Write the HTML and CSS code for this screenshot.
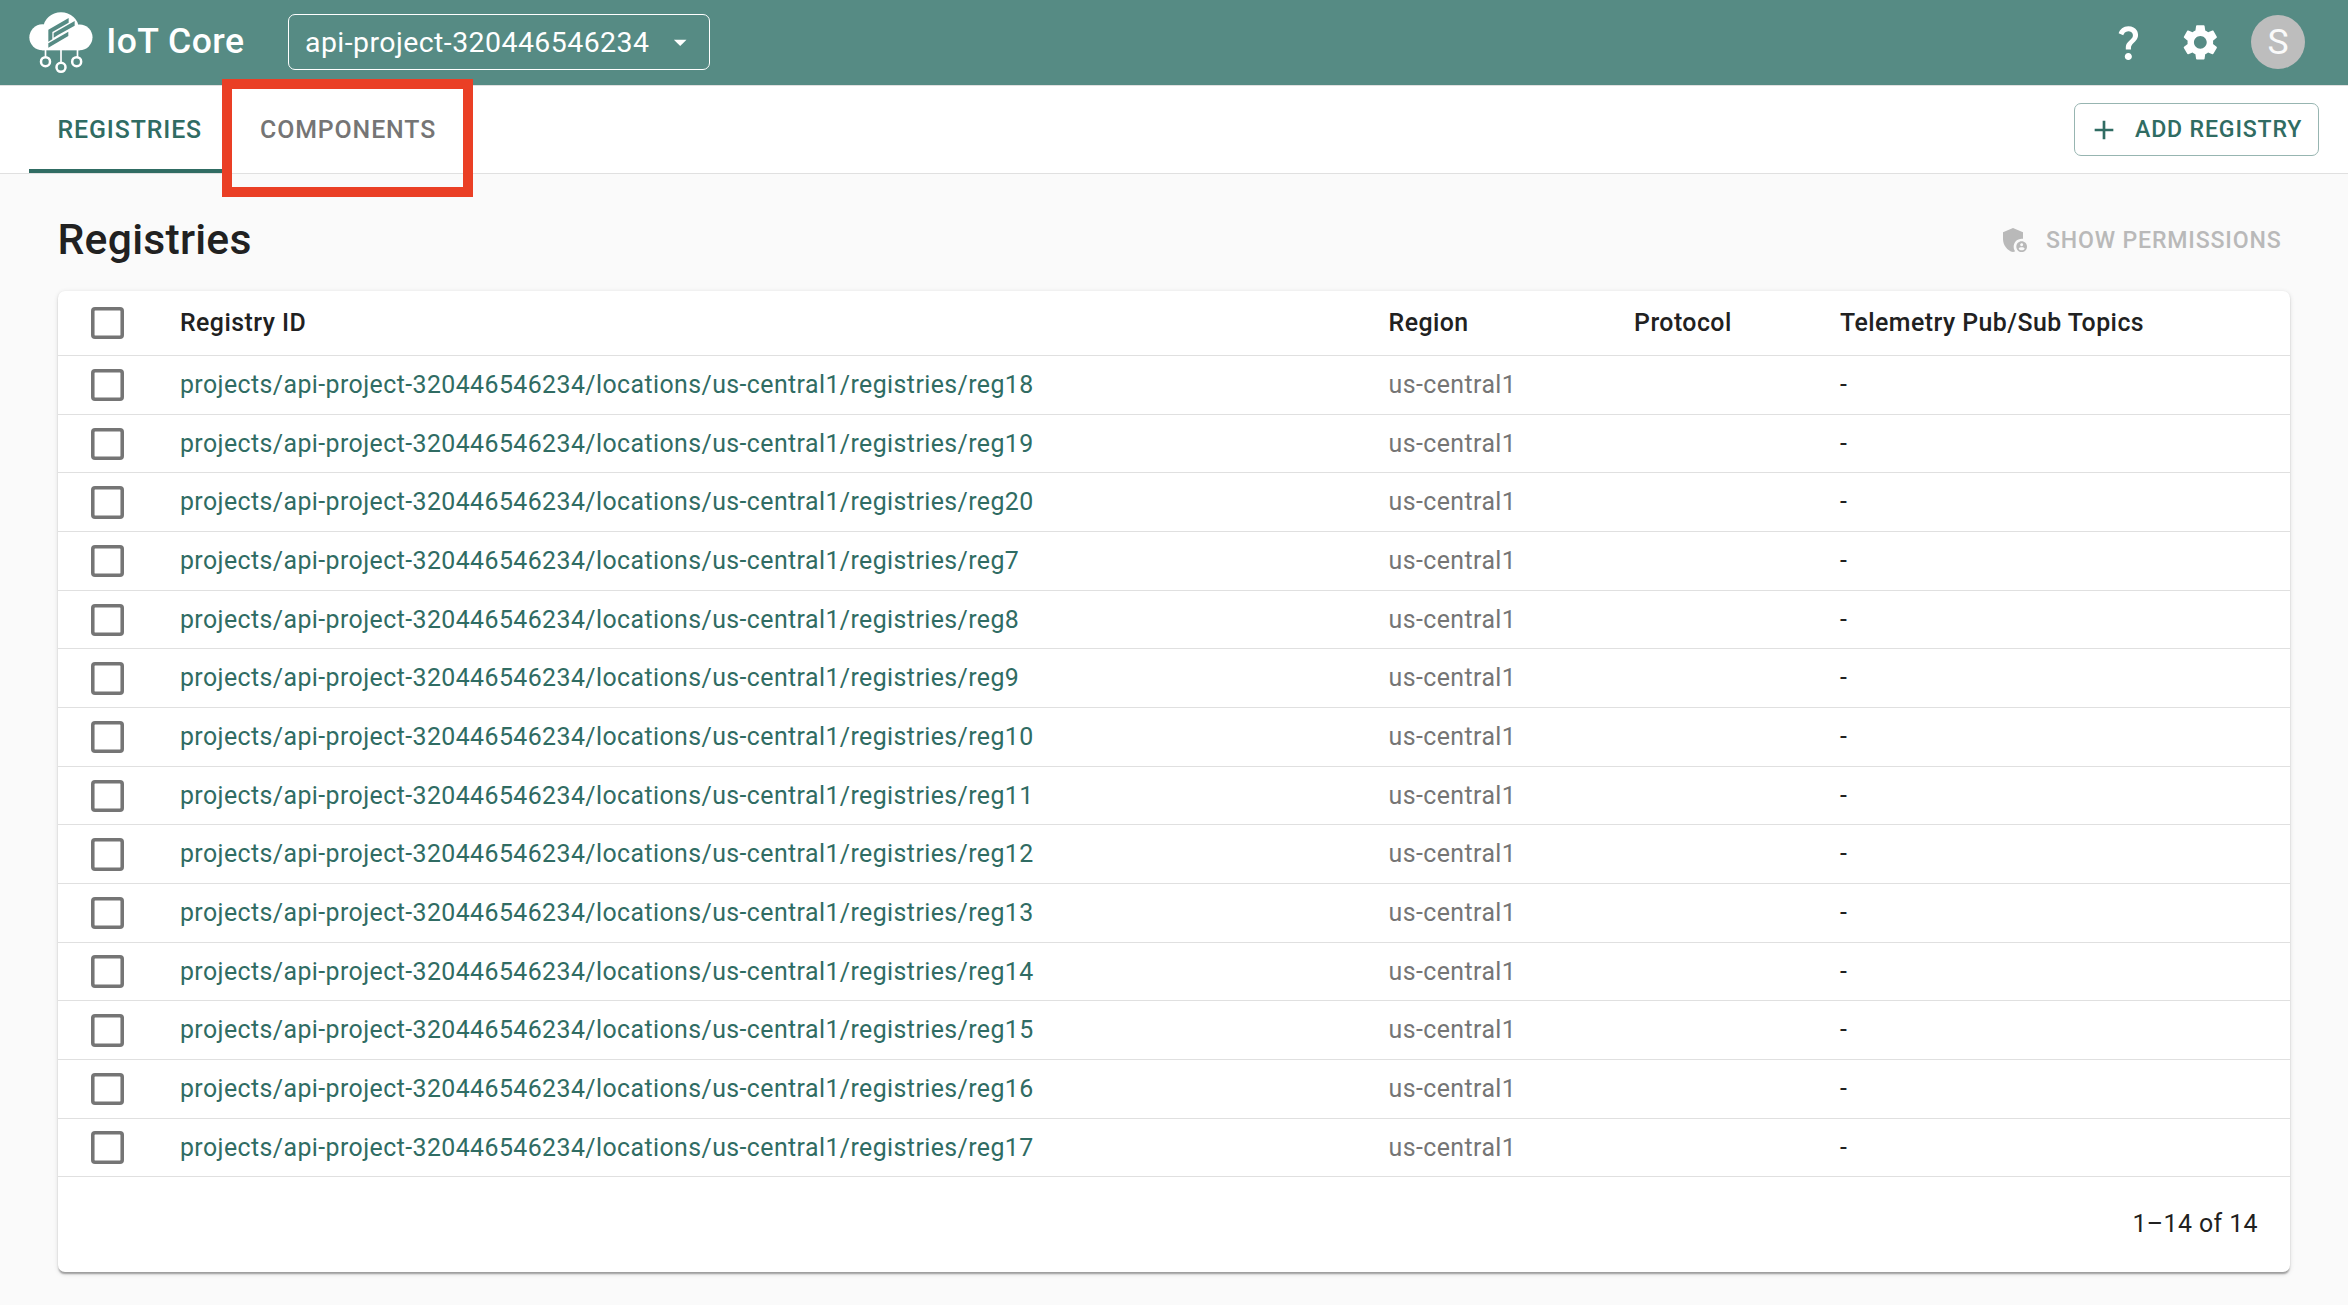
FILE: index.html
```
<!DOCTYPE html>
<html lang="en">
<head>
<meta charset="utf-8">
<title>IoT Core</title>
<link rel="stylesheet" href="styles.css">
</head>
<body>
<header class="appbar">
  <svg class="logo" viewBox="86 35 192 186" aria-hidden="true">
    <g fill="#fff">
      <circle cx="126" cy="111" r="39"/>
      <circle cx="238" cy="111" r="38.5"/>
      <ellipse cx="182" cy="83" rx="53" ry="47"/>
      <rect x="126" y="78" width="112" height="72"/>
      <rect x="133" y="148" width="5" height="22"/>
      <rect x="179.500" y="148" width="5" height="38"/>
      <rect x="229" y="148" width="5" height="22"/>
    </g>
    <g fill="none" stroke="#fff" stroke-width="7.500">
      <circle cx="135.500" cy="184" r="13.500"/>
      <circle cx="182" cy="201" r="13.500"/>
      <circle cx="229" cy="184" r="13.500"/>
    </g>
    <g fill="#568b84">
      <path d="M144 88 205 53V67L156 95V117L144 124Z"/>
      <path d="M160 98 223 62V76L173 104 160 112Z"/>
      <path d="M144 129 204 94V107L144 142Z"/>
    </g>
  </svg>
  <span class="brand">IoT Core</span>
  <div class="project"><span>api-project-320446546234</span>
    <svg class="arrow" viewBox="0 0 24 24"><path fill="#fff" d="m7 10 5 5 5-5z"/></svg>
  </div>
  <div class="tools">
    <svg class="tool help" viewBox="0 0 24 24"><path fill="#fff" d="M11.070 12.850c.770-1.390 2.250-2.210 3.110-3.440.910-1.290.400-3.700-2.180-3.700-1.690 0-2.520 1.280-2.870 2.340L6.540 6.960C7.250 4.830 9.180 3 11.990 3c2.350 0 3.960 1.070 4.780 2.410.700 1.150 1.110 3.300.030 4.900-1.200 1.770-2.350 2.310-2.970 3.450-.250.460-.350.760-.350 2.240h-2.890c-.010-.780-.130-2.050.480-3.150zM14 20c0 1.100-.900 2-2 2s-2-.900-2-2 .900-2 2-2 2 .900 2 2z"/></svg>
    <svg class="tool" viewBox="0 0 24 24"><path fill="#fff" d="M19.140 12.940c.040-.300.060-.610.060-.940 0-.320-.020-.640-.070-.940l2.030-1.580c.180-.140.230-.410.120-.610l-1.920-3.320c-.120-.220-.370-.290-.590-.220l-2.390.960c-.500-.380-1.030-.700-1.620-.940l-.360-2.540c-.040-.240-.240-.410-.480-.410h-3.840c-.240 0-.430.170-.470.410l-.360 2.540c-.590.240-1.130.570-1.620.940l-2.390-.960c-.220-.080-.470 0-.590.220L2.740 8.870c-.120.210-.080.470.120.610l2.030 1.580c-.050.300-.090.630-.090.940s.020.640.070.940l-2.030 1.580c-.180.140-.230.410-.120.610l1.920 3.320c.120.220.370.290.590.220l2.390-.960c.500.380 1.030.700 1.620.940l.360 2.540c.050.240.240.410.480.410h3.840c.240 0 .440-.170.470-.410l.360-2.540c.590-.240 1.130-.560 1.620-.940l2.390.960c.220.080.470 0 .590-.220l1.920-3.320c.120-.220.070-.470-.120-.610l-2.010-1.580zM12 15.600c-1.980 0-3.600-1.620-3.600-3.600s1.620-3.600 3.600-3.600 3.600 1.620 3.600 3.600-1.620 3.600-3.600 3.600z"/></svg>
    <div class="avatar">S</div>
  </div>
</header>
<nav class="tabbar">
  <div class="tab active">REGISTRIES</div>
  <div class="tab second">COMPONENTS<i class="highlight"></i></div>
  <div class="add">
    <svg class="icon" viewBox="0 0 24 24"><path fill="currentColor" d="M19 13h-6v6h-2v-6H5v-2h6V5h2v6h6v2z"/></svg>
    <span>ADD REGISTRY</span>
  </div>
</nav>
<main class="content">
  <div class="heading">
    <h1>Registries</h1>
    <div class="permissions">
      <svg class="icon" viewBox="0 0 24 24"><g fill="currentColor"><path d="M17 11c.340 0 .670.040 1 .090V6.270L10.500 3 3 6.270v4.910c0 4.540 3.200 8.790 7.500 9.820.550-.130 1.080-.320 1.600-.550-.690-.980-1.100-2.170-1.100-3.450 0-3.310 2.690-6 6-6z"/><path d="M17 13c-2.210 0-4 1.790-4 4s1.790 4 4 4 4-1.790 4-4-1.790-4-4-4zm0 1.380c.620 0 1.120.510 1.120 1.120s-.510 1.120-1.120 1.120-1.120-.510-1.120-1.120.500-1.120 1.120-1.120zm0 5.370c-.930 0-1.740-.460-2.240-1.170.050-.720 1.510-1.080 2.240-1.080s2.190.360 2.240 1.080c-.500.710-1.310 1.170-2.240 1.170z"/></g></svg>
      <span>SHOW PERMISSIONS</span>
    </div>
  </div>
  <section class="card">
    <div class="row head"><i class="check"></i><span>Registry ID</span><span>Region</span><span>Protocol</span><span>Telemetry Pub/Sub Topics</span></div>
    <div class="row"><i class="check"></i><a>projects/api-project-320446546234/locations/us-central1/registries/reg18</a><span class="region">us-central1</span><span></span><span>-</span></div>
    <div class="row"><i class="check"></i><a>projects/api-project-320446546234/locations/us-central1/registries/reg19</a><span class="region">us-central1</span><span></span><span>-</span></div>
    <div class="row"><i class="check"></i><a>projects/api-project-320446546234/locations/us-central1/registries/reg20</a><span class="region">us-central1</span><span></span><span>-</span></div>
    <div class="row"><i class="check"></i><a>projects/api-project-320446546234/locations/us-central1/registries/reg7</a><span class="region">us-central1</span><span></span><span>-</span></div>
    <div class="row"><i class="check"></i><a>projects/api-project-320446546234/locations/us-central1/registries/reg8</a><span class="region">us-central1</span><span></span><span>-</span></div>
    <div class="row"><i class="check"></i><a>projects/api-project-320446546234/locations/us-central1/registries/reg9</a><span class="region">us-central1</span><span></span><span>-</span></div>
    <div class="row"><i class="check"></i><a>projects/api-project-320446546234/locations/us-central1/registries/reg10</a><span class="region">us-central1</span><span></span><span>-</span></div>
    <div class="row"><i class="check"></i><a>projects/api-project-320446546234/locations/us-central1/registries/reg11</a><span class="region">us-central1</span><span></span><span>-</span></div>
    <div class="row"><i class="check"></i><a>projects/api-project-320446546234/locations/us-central1/registries/reg12</a><span class="region">us-central1</span><span></span><span>-</span></div>
    <div class="row"><i class="check"></i><a>projects/api-project-320446546234/locations/us-central1/registries/reg13</a><span class="region">us-central1</span><span></span><span>-</span></div>
    <div class="row"><i class="check"></i><a>projects/api-project-320446546234/locations/us-central1/registries/reg14</a><span class="region">us-central1</span><span></span><span>-</span></div>
    <div class="row"><i class="check"></i><a>projects/api-project-320446546234/locations/us-central1/registries/reg15</a><span class="region">us-central1</span><span></span><span>-</span></div>
    <div class="row"><i class="check"></i><a>projects/api-project-320446546234/locations/us-central1/registries/reg16</a><span class="region">us-central1</span><span></span><span>-</span></div>
    <div class="row"><i class="check"></i><a>projects/api-project-320446546234/locations/us-central1/registries/reg17</a><span class="region">us-central1</span><span></span><span>-</span></div>
    <div class="pager">1–14 of 14</div>
  </section>
</main>
</body>
</html>
```
FILE: styles.css
```
* { box-sizing: border-box; }
html, body { height: 100%; overflow: hidden; }
body {
  margin: 0;
  background: #fafafa;
  color: #212121;
  font-family: Roboto, "Liberation Sans", sans-serif;
  font-size: 24.89px;
  letter-spacing: 0.42px;
}
svg { display: block; flex: none; }

.appbar {
  display: flex;
  align-items: center;
  height: 85px;
  padding: 0 43px 0 28.67px;
  background: #568b84;
  color: #fff;
}
.logo { width: 64px; height: 62px; }
.brand {
  width: 181.33px;
  padding-left: 13.5px;
  margin-top: -3px;
  font-size: 35.56px;
  font-weight: 500;
  letter-spacing: 0.48px;
  white-space: nowrap;
}
.project {
  display: flex;
  align-items: center;
  justify-content: space-between;
  width: 422px;
  height: 56px;
  margin-left: 14px;
  margin-top: -1px;
  padding: 0 13.5px 0 16px;
  border: 1px solid #fff;
  border-radius: 7px;
  font-size: 28.44px;
  letter-spacing: 0.455px;
}
.arrow { width: 30.4px; height: 30.4px; }
.tools { display: flex; align-items: center; margin-left: auto; }
.tool { width: 42.67px; height: 42.67px; margin-right: 29px; }
.tool.help { margin-right: 29.5px; }
.avatar {
  display: flex;
  align-items: center;
  justify-content: center;
  width: 54px;
  height: 54px;
  margin-top: -1px;
  border-radius: 50%;
  background: #bdbdbd;
  color: #fafafa;
  font-size: 35.56px;
  letter-spacing: 0;
}

.tabbar {
  display: flex;
  height: 89px;
  padding: 0 29px;
  background: #fff;
  border-top: 1px solid #e0e0e0;
  border-bottom: 1px solid #e0e0e0;
}
.tab {
  position: relative;
  height: 87px;
  padding: 0 28.44px;
  line-height: 87px;
  font-weight: 500;
  letter-spacing: 0.89px;
  color: #757575;
}
.tab.active { color: #306c63; border-bottom: 4px solid #306c63; }
.tab.second { padding-left: 29.5px; }
.highlight {
  position: absolute;
  left: -8.3px;
  top: -7px;
  width: 251px;
  height: 118px;
  border: 10px solid #ea3f25;
}
.add, .permissions {
  display: flex;
  align-items: center;
  font-size: 23.11px;
  font-weight: 500;
  letter-spacing: 0.83px;
  white-space: nowrap;
}
.add {
  width: 245px;
  height: 53px;
  margin: 17px 0 0 auto;
  padding-left: 13px;
  border: 1px solid #97b5b1;
  border-radius: 7px;
  color: #306c63;
}
.icon { width: 32px; height: 32px; margin-right: 15px; }

.content { padding: 0 58px; }
.heading {
  display: flex;
  align-items: center;
  justify-content: space-between;
  height: 117px;
  padding-top: 15px;
}
h1 {
  margin: -1px 0 0 -0.5px;
  font-size: 42.67px;
  font-weight: 500;
  letter-spacing: 0.25px;
  line-height: 1;
}
.permissions { padding-right: 8.5px; color: #b9b9b9; }

.card {
  background: #fff;
  border-radius: 7px;
  box-shadow:
    0 3.56px 1.78px -1.78px rgba(0, 0, 0, .2),
    0 1.78px 1.78px 0 rgba(0, 0, 0, .14),
    0 1.78px 5.33px 0 rgba(0, 0, 0, .12);
}
.row {
  display: grid;
  grid-template-columns: 88.7px 1208.6px 245.5px 206px 1fr;
  align-items: center;
  height: 58.667px;
  padding-left: 33.3px;
  border-bottom: 1px solid #e0e0e0;
  line-height: 29px;
  white-space: nowrap;
}
.row.head { height: 65px; font-weight: 500; letter-spacing: 0.45px; }
.row > span, .row > a { margin-top: -0.3px; }
.row.head > span { margin-top: -2px; }
.row a { color: #306c63; }
.row .region { color: #757575; }
.check {
  width: 32.4px;
  height: 32.4px;
  margin-top: 0.6px;
  box-shadow: inset 0 0 0 3.56px #757575;
  border-radius: 4px;
}
.pager {
  display: flex;
  align-items: center;
  justify-content: flex-end;
  height: 94.66px;
  padding: 0 32px 3px 0;
}
```
